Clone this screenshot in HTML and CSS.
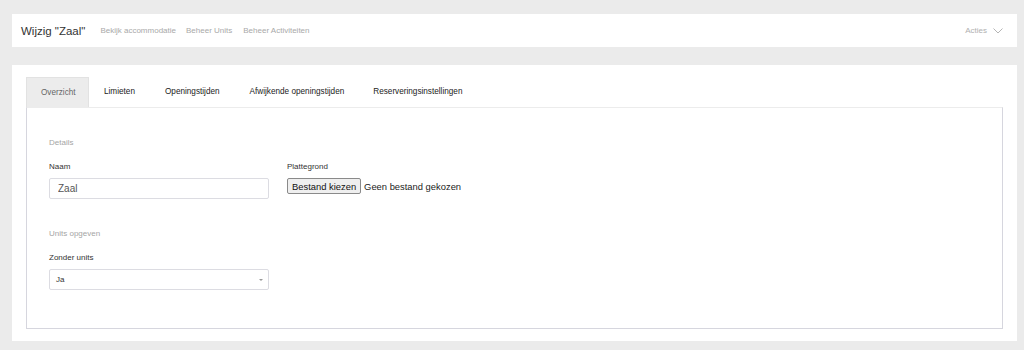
FILE: index.html
```html
<!DOCTYPE html>
<html lang="nl">
<head>
    <meta charset="UTF-8">
    <meta name="viewport" content="width=device-width, initial-scale=1.0">
    <title>Wijzig "Zaal"</title>
    <link rel="stylesheet" href="styles.css">
</head>
<body>
    <div class="topbar">
        <div class="topbar-left">
            <h1>Wijzig "Zaal"</h1>
            <a href="#">Bekijk accommodatie</a>
            <a href="#">Beheer Units</a>
            <a href="#">Beheer Activiteiten</a>
        </div>
        <div class="acties">
            Acties
            <svg width="10" height="6" viewBox="0 0 10 6"><path d="M0.5 0.5 L5 5 L9.5 0.5" fill="none" stroke="#b5b5b5" stroke-width="1"/></svg>
        </div>
    </div>

    <div class="card">
        <ul class="tabs">
            <li class="active">Overzicht</li>
            <li>Limieten</li>
            <li>Openingstijden</li>
            <li>Afwijkende openingstijden</li>
            <li>Reserveringsinstellingen</li>
        </ul>

        <div class="tab-panel">
            <div class="section-title">Details</div>
            <div class="row">
                <div class="form-group">
                    <label for="naam">Naam</label>
                    <input type="text" id="naam" value="Zaal">
                </div>
                <div class="form-group">
                    <label>Plattegrond</label>
                    <div class="file-input">
                        <button type="button">Bestand kiezen</button>
                        <span>Geen bestand gekozen</span>
                    </div>
                </div>
            </div>

            <div class="section-title units">Units opgeven</div>
            <div class="form-group">
                <label for="zonder">Zonder units</label>
                <div class="select">
                    <span>Ja</span>
                    <span class="caret"></span>
                </div>
            </div>
        </div>
    </div>
</body>
</html>
```

FILE: styles.css
```css
* { margin: 0; padding: 0; box-sizing: border-box; }
body { font-family: "Liberation Sans", Arial, sans-serif; background: #ebebeb; padding: 14px 7px 0 12px; color: #333; }
.topbar { background: white; height: 33px; display: flex; align-items: center; justify-content: space-between; padding: 0 14px 0 9px; }
.topbar-left { display: flex; align-items: center; }
.topbar h1 { font-size: 11.5px; font-weight: normal; color: #333; margin-right: 15px; margin-top: 1px; }
.topbar a { font-size: 8px; color: #a9a9a9; text-decoration: none; margin-right: 10px; }
.topbar a:nth-child(3) { margin-right: 11px; }
.acties { font-size: 8px; color: #b0b0b0; display: flex; align-items: center; gap: 6px; }
.card { background: white; margin-top: 18px; height: 276px; padding: 12px 14px 0 14px; }
.tabs { list-style: none; display: flex; height: 30px; }
.tabs li { font-size: 8.2px; color: #222; line-height: 30px; }
.tabs li.active { background: #ececec; color: #666; border: 1px solid #e2e2e2; border-bottom: none; padding: 0 14px; width: 63px; }
.tabs li:nth-child(2) { padding-left: 15px; padding-right: 30px; }
.tabs li:nth-child(3) { padding-right: 30px; }
.tabs li:nth-child(4) { padding-right: 29px; }
.tab-panel { border: 1px solid #d6d6de; border-top-color: #ececec; height: 222px; padding: 30px 22px 0 22px; }
.section-title { font-size: 8px; color: #a5a5a5; margin-bottom: 15px; }
.section-title.units { margin-top: 30px; margin-bottom: 15px; }
.row { display: flex; gap: 18px; }
.form-group label { display: block; font-size: 8px; color: #333; margin-bottom: 7px; }
.form-group input { width: 220px; height: 21px; border: 1px solid #dcdce2; border-radius: 2px; font-family: inherit; font-size: 10px; padding: 0 8px; color: #555; }
.file-input { display: flex; align-items: center; font-size: 9.4px; color: #222; }
.file-input button { font-family: inherit; font-size: 9.4px; height: 16px; padding: 0 4px; background: #efefef; border: 1px solid #8a8a8a; border-radius: 2px; color: #111; margin-right: 3px; }
.select { width: 220px; height: 21px; border: 1px solid #dcdce2; border-radius: 2px; display: flex; align-items: center; justify-content: space-between; padding: 0 5px 0 6px; font-size: 8px; color: #333; }
.caret { width: 0; height: 0; border-left: 2.5px solid transparent; border-right: 2.5px solid transparent; border-top: 2.5px solid #999; }
```
